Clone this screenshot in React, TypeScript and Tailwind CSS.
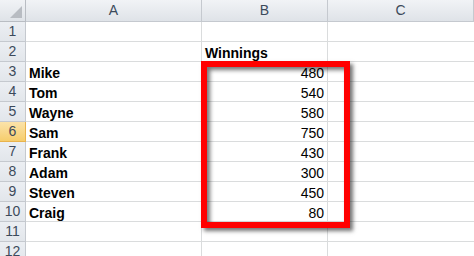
const rows: { name: string; value: string }[] = [
  { name: '', value: '' },
  { name: '', value: 'Winnings' },
  { name: 'Mike', value: '480' },
  { name: 'Tom', value: '540' },
  { name: 'Wayne', value: '580' },
  { name: 'Sam', value: '750' },
  { name: 'Frank', value: '430' },
  { name: 'Adam', value: '300' },
  { name: 'Steven', value: '450' },
  { name: 'Craig', value: '80' },
  { name: '', value: '' },
  { name: '', value: '' },
];

export default function App() {
  return (
    <div
      className="relative w-[474px] h-[256px] overflow-hidden bg-white text-[14px] text-black"
      style={{ fontFamily: '"Liberation Sans", Arial, sans-serif' }}
    >
      <div className="grid grid-cols-[26px_176px_126px_1fr]">
        {/* column headers */}
        <div className="relative h-[22px] border-r border-b border-[#b9bdc3] bg-gradient-to-b from-[#f1f3f6] to-[#dfe3e8]">
          <svg className="absolute right-[3px] bottom-[3px]" width="12" height="12" viewBox="0 0 12 12">
            <polygon points="12,0 12,12 0,12" fill="#b8bcc2" />
          </svg>
        </div>
        {['A', 'B', 'C'].map((c) => (
          <div
            key={c}
            className="h-[22px] flex items-center justify-center border-r border-b border-[#c5c9cf] bg-gradient-to-b from-[#f1f3f6] to-[#dfe3e8] text-[14px] text-[#3c4a5b]"
          >
            {c}
          </div>
        ))}

        {rows.map((r, i) => {
          const selected = i === 5;
          return [
            <div
              key={`h${i}`}
              className={`h-[20px] flex items-center justify-center border-r border-b text-[14px] text-[#3c4a5b] ${
                selected
                  ? 'bg-gradient-to-b from-[#fbe3a9] to-[#f6cd6b] border-[#e9b34c]'
                  : 'bg-gradient-to-b from-[#eceff3] to-[#e2e6eb] border-[#c5c9cf]'
              }`}
            >
              {i + 1}
            </div>,
            <div
              key={`a${i}`}
              className="h-[20px] flex items-end px-[3px] leading-[16px] border-r border-b border-[#dadcdd] font-bold"
            >
              {r.name}
            </div>,
            <div
              key={`b${i}`}
              className={`h-[20px] flex items-end px-[3px] leading-[16px] border-r border-b border-[#dadcdd] ${
                i === 1 ? 'justify-start font-bold' : 'justify-end'
              }`}
            >
              {r.value}
            </div>,
            <div key={`c${i}`} className="h-[20px] border-b border-[#dadcdd]" />,
          ];
        })}
      </div>

      {/* red highlight box */}
      <div className="absolute left-[201px] top-[61px] w-[149px] h-[167px] border-[6px] border-[#ff0000] shadow-[3px_3px_4px_rgba(0,0,0,0.55),inset_3px_3px_4px_rgba(0,0,0,0.55)]" />
    </div>
  );
}
